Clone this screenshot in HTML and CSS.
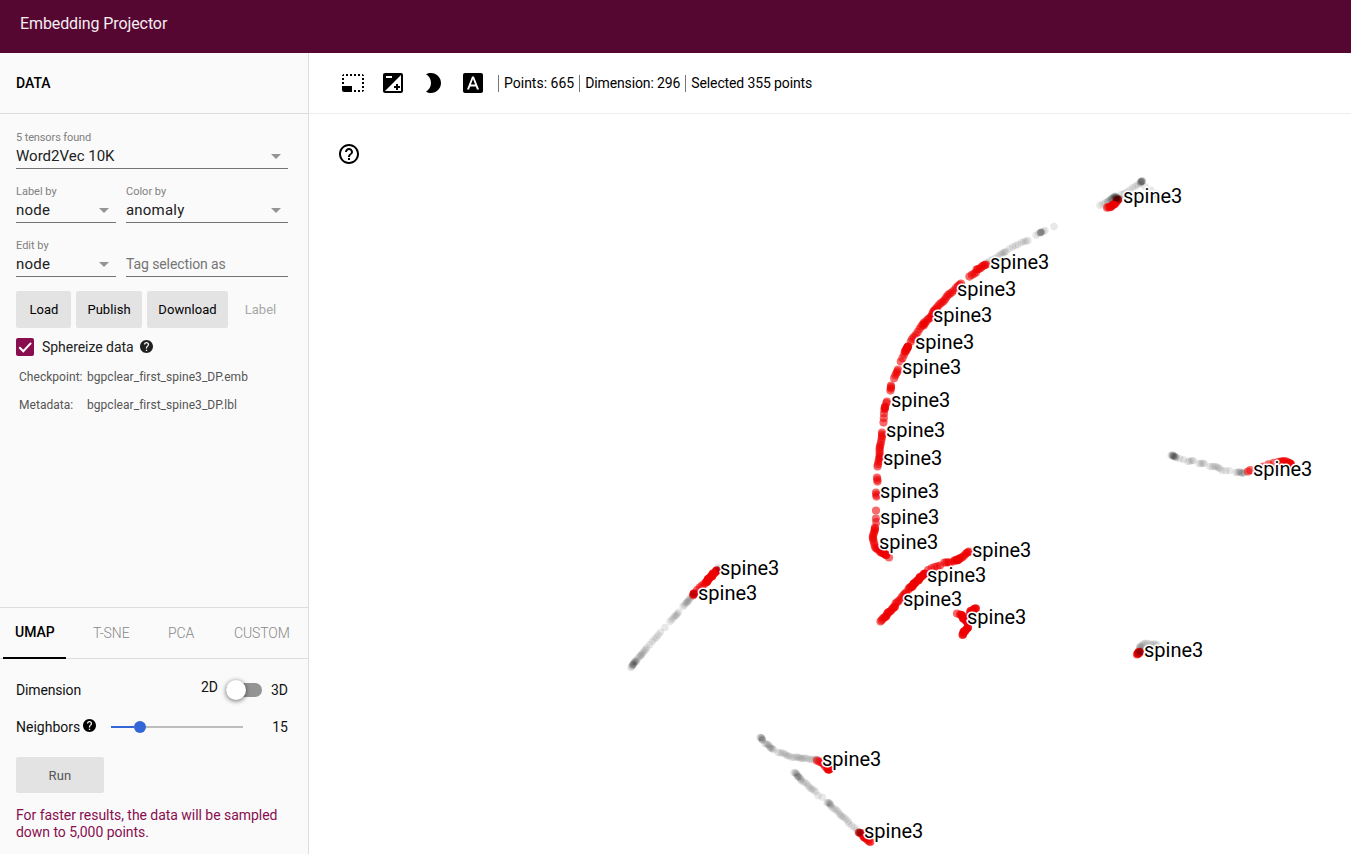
FILE: index.html
```html
<!DOCTYPE html>
<html lang="en">
<head>
<meta charset="utf-8">
<title>Embedding Projector</title>
<link rel="stylesheet" href="styles.css">
</head>
<body>
<svg class="defs" width="0" height="0">
  <symbol id="help" viewBox="2 2 20 20"><path d="M12 2C6.48 2 2 6.48 2 12s4.48 10 10 10 10-4.48 10-10S17.52 2 12 2zm1 17h-2v-2h2v2zm2.07-7.75l-.9.92C13.45 12.9 13 13.5 13 15h-2v-.5c0-1.1.45-2.1 1.17-2.83l1.24-1.26c.37-.36.59-.86.59-1.41 0-1.1-.9-2-2-2s-2 .9-2 2H8c0-2.21 1.79-4 4-4s4 1.79 4 4c0 .88-.36 1.68-.93 2.25z"/></symbol>
  <symbol id="caret" viewBox="0 0 10 5"><path d="M0 0h10L5 5z"/></symbol>
</svg>
<header class="appbar">Embedding Projector</header>
<div class="layout">
  <aside class="sidebar">
    <h2 class="panel-title">DATA</h2>
    <section class="data">
      <div class="row">
        <div class="field wide"><label class="tight">5 tensors found</label><div class="value dataset">Word2Vec 10K<svg class="caret"><use href="#caret"/></svg></div></div>
      </div>
      <div class="row">
        <div class="field narrow"><label>Label by</label><div class="value">node<svg class="caret"><use href="#caret"/></svg></div></div>
        <div class="field wide"><label>Color by</label><div class="value">anomaly<svg class="caret"><use href="#caret"/></svg></div></div>
      </div>
      <div class="row">
        <div class="field narrow"><label>Edit by</label><div class="value">node<svg class="caret"><use href="#caret"/></svg></div></div>
        <div class="field wide"><label></label><div class="value placeholder">Tag selection as</div></div>
      </div>
      <div class="buttons">
        <button class="btn load">Load</button><button class="btn publish">Publish</button><button class="btn download">Download</button><button class="btn flat">Label</button>
      </div>
      <div class="check-row">
        <span class="checkbox"><svg viewBox="0 0 18 18" width="18" height="18"><path d="M3.3 9.2l4 4 7.8-8.3" fill="none" stroke="#fff" stroke-width="2"/></svg></span>
        <span class="check-label">Sphereize data</span>
        <svg class="help dark"><use href="#help"/></svg>
      </div>
      <dl class="files">
        <dt>Checkpoint:</dt><dd>bgpclear_first_spine3_DP.emb</dd>
        <dt>Metadata:</dt><dd>bgpclear_first_spine3_DP.lbl</dd>
      </dl>
    </section>
    <section class="projection">
      <nav class="tabs">
        <span class="tab active">UMAP</span><span class="tab tsne">T-SNE</span><span class="tab pca">PCA</span><span class="tab custom">CUSTOM</span>
      </nav>
      <div class="controls">
        <div class="dimension">
          <span class="name">Dimension</span><span class="two">2D</span><span class="toggle"><span class="knob"></span></span><span>3D</span>
        </div>
        <div class="neighbors">
          <span>Neighbors</span><svg class="help"><use href="#help"/></svg>
          <span class="slider"><span class="filled"></span><span class="thumb"></span><span class="rest"></span></span>
          <span class="count">15</span>
        </div>
        <button class="btn run">Run</button>
        <p class="note">For faster results, the data will be sampled down to 5,000 points.</p>
      </div>
    </section>
  </aside>
  <main class="main">
    <div class="toolbar">
      <svg viewBox="0 0 24 24"><path d="M23 15h-2v2h2v-2zm0-4h-2v2h2v-2zm0 8h-2v2c1 0 2-1 2-2zM15 3h-2v2h2V3zm8 4h-2v2h2V7zm-2-4v2h2c0-1-1-2-2-2zM3 21h8v-6H1v4c0 1.1.9 2 2 2zM3 7H1v2h2V7zm12 12h-2v2h2v-2zm4-16h-2v2h2V3zm0 16h-2v2h2v-2zM3 3C2 3 1 4 1 5h2V3zm0 8H1v2h2v-2zm8-8H9v2h2V3zM7 3H5v2h2V3z"/></svg>
      <svg viewBox="0 0 24 24"><path d="M15 17v2h2v-2h2v-2h-2v-2h-2v2h-2v2h2zm5-15H4c-1.1 0-2 .9-2 2v16c0 1.1.9 2 2 2h16c1.1 0 2-.9 2-2V4c0-1.1-.9-2-2-2zM5 5h6v2H5V5zm15 15H4L20 4v16z"/></svg>
      <svg viewBox="0 0 24 24"><path d="M10 2c-1.82 0-3.53.5-5 1.35C7.99 5.08 10 8.3 10 12s-2.01 6.92-5 8.65C6.47 21.5 8.18 22 10 22c5.52 0 10-4.48 10-10S15.52 2 10 2z"/></svg>
      <svg viewBox="0 0 24 24"><path d="M9.93 13.5h4.14L12 7.98zM20 2H4c-1.1 0-2 .9-2 2v16c0 1.1.9 2 2 2h16c1.1 0 2-.9 2-2V4c0-1.1-.9-2-2-2zm-4.05 16.5l-1.14-3H9.17l-1.12 3H5.96l5.11-13h1.86l5.11 13h-2.09z"/></svg>
      <div class="stats"><span class="points">Points: 665</span><span>Dimension: 296</span><span>Selected 355 points</span></div>
    </div>
    <div class="scatter">
      <svg id="plot" width="1042" height="740" viewBox="309 114 1042 740"></svg>
      <svg class="tip" viewBox="0 0 24 24"><path d="M11 18h2v-2h-2v2zm1-16C6.48 2 2 6.48 2 12s4.48 10 10 10 10-4.48 10-10S17.52 2 12 2zm0 18c-4.41 0-8-3.59-8-8s3.59-8 8-8 8 3.59 8 8-3.59 8-8 8zm0-14c-2.21 0-4 1.79-4 4h2c0-1.1.9-2 2-2s2 .9 2 2c0 2-3 1.75-3 5h2c0-2.25 3-2.5 3-5 0-2.21-1.79-4-4-4z"/></svg>
    </div>
  </main>
</div>
<script src="plot.js"></script>
</body>
</html>
```

FILE: styles.css
```css
* { box-sizing: border-box; }
body { margin: 0; height: 854px; overflow: hidden; display: flex; flex-direction: column; background: #fff; color: #000; font: 14px/20px Roboto, sans-serif; }
.defs { position: absolute; }
.appbar { height: 53px; flex: none; padding: 14px 20px 0; background: #560731; font-size: 16px; letter-spacing: -.1px; color: #f5edf1; }
.layout { display: flex; flex: 1; min-height: 0; }
.sidebar { width: 309px; flex: none; display: flex; flex-direction: column; background: #fafafa; border-right: 1px solid #ddd; }
.panel-title { margin: 0; height: 61px; padding: 20px 16px; border-bottom: 1px solid #ddd; font-size: 14px; font-weight: 500; }
.data { padding: 15px 20px 0 16px; flex: 1; }
.row { display: flex; gap: 10px; margin-bottom: 14px; }
.field { border-bottom: 1px solid #737373; }
.field.wide { flex: 1; }
.field.narrow { width: 100px; }
.field label { display: block; height: 16px; font-size: 11px; line-height: 17px; letter-spacing: 0; color: #808080; }
.field label.tight { letter-spacing: -.12px; }
.value { height: 23px; padding-bottom: 2px; display: flex; align-items: center; justify-content: space-between; padding-right: 7px; font-size: 15px; letter-spacing: .2px; color: #212121; }
.value.dataset { letter-spacing: 0; }
.value.placeholder { color: #757575; font-size: 14px; letter-spacing: -.1px; }
.caret { width: 10px; height: 5px; margin-top: 2px; fill: #949494; }
.buttons { display: flex; gap: 5px; }
.btn { height: 37px; padding: 0; border: 0; border-radius: 2px; background: #e3e3e3; color: #000; font: 13px Roboto, sans-serif; letter-spacing: .05px; }
.load { width: 55px; padding-left: 1px; }
.publish { width: 66px; }
.download { width: 81px; }
.flat { width: 55px; background: none; color: #a8a8a8; }
.check-row { display: flex; align-items: center; height: 18px; margin-top: 10px; }
.checkbox { width: 18px; height: 18px; border-radius: 2px; background: #880e4f; }
.checkbox svg { display: block; }
.check-label { width: 98px; padding-left: 8px; white-space: nowrap; letter-spacing: -.04px; color: #212121; }
.help { width: 13px; height: 13px; }
.help.dark { margin: -2px 0 0 8px; fill: #212121; }
.files { display: grid; grid-template-columns: 68px 1fr; row-gap: 8px; margin: 11px 0 0 3px; font-size: 12px; letter-spacing: .04px; color: #555; white-space: nowrap; }
.files dd { margin: 0; }
.projection { height: 247px; border-top: 1px solid #ddd; }
.tabs { height: 51px; display: flex; border-bottom: 1px solid #ddd; line-height: 50px; font-weight: 300; letter-spacing: -.1px; color: #888; padding-left: 3px; }
.tab.active { width: 63px; height: 51px; border-bottom: 2px solid #000; padding-left: 12px; line-height: 48px; color: #000; font-weight: 500; letter-spacing: 0; }
.tsne { width: 75px; padding-left: 27px; }
.pca { width: 66px; padding-left: 27px; }
.custom { padding-left: 27px; }
.controls { padding: 21px 20px 0 16px; color: #111; }
.dimension { display: flex; height: 20px; }
.dimension .name { width: 185px; letter-spacing: -.15px; }
.two { width: 25px; margin-top: -3px; }
.toggle { width: 36px; height: 14px; margin: 3px 9px 0 0; border-radius: 7px; background: #949494; }
.knob { display: block; width: 20px; height: 20px; margin-top: -3px; border-radius: 50%; background: #fff; box-shadow: 0 1px 5px rgba(0,0,0,.6); }
.neighbors { display: flex; align-items: center; height: 20px; margin-top: 17px; }
.neighbors > span:first-child { width: 67px; }
.neighbors .help { margin-top: -3px; }
.slider { display: flex; align-items: center; width: 132px; margin-left: 15px; }
.filled { width: 23px; height: 2px; background: #3367d6; }
.thumb { width: 12px; height: 12px; border-radius: 50%; background: #3367d6; }
.rest { flex: 1; height: 2px; background: #bdbdbd; }
.count { margin-left: auto; }
.run { display: block; width: 88px; height: 36px; margin-top: 20px; color: #555; letter-spacing: .15px; }
.note { margin: 14px 0 0; line-height: 17px; letter-spacing: -.04px; color: #880e4f; }
.main { flex: 1; min-width: 0; }
.toolbar { height: 61px; display: flex; align-items: center; gap: 16px; padding-left: 32px; border-bottom: 1px solid #eee; }
.toolbar svg { width: 24px; height: 24px; }
.stats { display: flex; margin-left: -3px; line-height: 17px; letter-spacing: -.12px; }
.stats .points { letter-spacing: 0; }
.stats span { border-left: 1px solid #777; padding: 0 5px; white-space: nowrap; }
.scatter { position: relative; height: 740px; }
#plot { display: block; }
.tip { position: absolute; left: 28px; top: 28px; width: 24px; height: 24px; }
.label { font: 20px Roboto, sans-serif; fill: #000; stroke: #fff; stroke-width: 3px; stroke-linejoin: round; paint-order: stroke; }
.gray { fill: #000; fill-opacity: .09; }
.red { fill: #ee0000; fill-opacity: .58; }
```

FILE: plot.js
```js
// Each strand: class, number of points, then the vertices it runs through.
const strands = [
  ["gray", 1, 1054, 226],
  ["gray", 5, 1045, 230, 1036, 235],
  ["gray", 4, 1041, 232, 1040, 233],
  ["gray", 4, 1028, 240, 1021, 243],
  ["gray", 4, 1018, 244, 1009, 249],
  ["gray", 6, 1006, 251, 998, 256],
  ["gray", 4, 995, 258, 986, 263],
  ["gray", 8, 1142, 181, 1141, 182],
  ["gray", 8, 1140, 183, 1122, 195],
  ["gray", 3, 1145, 186, 1156, 194],
  ["gray", 2, 1157, 196, 1137, 198],
  ["gray", 4, 1100, 205, 1107, 202],
  ["gray", 10, 1108, 201, 1116, 196],
  ["gray", 10, 1171, 455, 1176, 457],
  ["gray", 3, 1176, 457, 1183, 460],
  ["gray", 4, 1188, 461, 1193, 461],
  ["gray", 4, 1199, 463, 1204, 464],
  ["gray", 6, 1210, 466, 1220, 468],
  ["gray", 3, 1222, 470, 1229, 471],
  ["gray", 8, 1236, 472, 1245, 473],
  ["gray", 11, 631, 667, 636, 661],
  ["gray", 9, 636, 660, 646, 650],
  ["gray", 7, 647, 647, 661, 632],
  ["gray", 1, 665, 627],
  ["gray", 7, 670, 621, 679, 612],
  ["gray", 9, 683, 606, 692, 597],
  ["gray", 7, 760, 737, 763, 740],
  ["gray", 9, 765, 743, 774, 750],
  ["gray", 7, 778, 752, 790, 756],
  ["gray", 15, 792, 757, 819, 760],
  ["gray", 10, 794, 772, 801, 779],
  ["gray", 9, 801, 780, 816, 792],
  ["gray", 2, 818, 795, 822, 797],
  ["gray", 6, 827, 802, 831, 805],
  ["gray", 10, 832, 807, 848, 821],
  ["gray", 5, 849, 823, 859, 833],
  ["gray", 14, 1138, 652, 1140, 646, 1147, 643, 1157, 645],
  ["gray", 2, 1166, 648, 1176, 652],
  ["red", 8, 986, 264, 977, 270],
  ["red", 4, 976, 272, 969, 277],
  ["red", 26, 961, 283, 939, 305, 924, 325],
  ["red", 9, 924, 322, 911, 342],
  ["red", 6, 908, 346, 905, 351],
  ["red", 6, 908, 346, 901, 361],
  ["red", 5, 898, 369, 894, 378],
  ["red", 4, 891, 385, 890, 391],
  ["red", 2, 887, 401, 886, 403],
  ["red", 4, 885, 406, 884, 410],
  ["red", 3, 884, 413, 883, 423],
  ["red", 16, 882, 432, 880, 450, 878, 466],
  ["red", 3, 877, 477, 877, 482],
  ["red", 3, 876, 492, 876, 497],
  ["red", 1, 876, 510],
  ["red", 2, 876, 518, 876, 522],
  ["red", 22, 875, 527, 873, 536, 875, 548, 883, 553, 886, 555],
  ["red", 1, 889, 557],
  ["red", 15, 969, 551, 960, 559, 954, 561],
  ["red", 4, 950, 562, 944, 563],
  ["red", 5, 940, 565, 928, 570],
  ["red", 25, 925, 573, 909, 589],
  ["red", 8, 906, 592, 896, 604],
  ["red", 16, 895, 606, 881, 621],
  ["red", 1, 957, 613],
  ["red", 12, 960, 614, 967, 622],
  ["red", 14, 976, 608, 971, 611, 968, 622],
  ["red", 12, 968, 627, 962, 635],
  ["red", 22, 717, 570, 706, 582],
  ["red", 5, 706, 582, 697, 590],
  ["red", 5, 694, 593, 693, 595],
  ["gray", 2, 718, 567, 719, 569],
  ["gray", 2, 693, 594, 694, 594],
  ["red", 7, 817, 760, 829, 769],
  ["red", 4, 828, 769, 829, 770],
  ["red", 12, 859, 832, 870, 842],
  ["gray", 4, 858, 832, 860, 833],
  ["red", 2, 1248, 471, 1250, 470],
  ["red", 14, 1258, 468, 1280, 461, 1288, 462, 1291, 465],
  ["red", 10, 1137, 654, 1140, 652],
  ["gray", 5, 1138, 653, 1141, 651],
  ["red", 14, 1118, 199, 1114, 205, 1107, 208],
  ["gray", 12, 1114, 197, 1120, 199]
];
const labels = [
  [1123, 203], [990, 269], [957, 296], [933, 322], [915, 349], [902, 374],
  [891, 407], [886, 437], [883, 465], [880, 498], [880, 524], [879, 549],
  [972, 557], [927, 582], [903, 606], [967, 624], [720, 575], [698, 600],
  [1253, 476], [1144, 657], [822, 766], [864, 838]
];
const plot = document.getElementById("plot");
function add(tag, attrs, text) {
  const el = document.createElementNS("http://www.w3.org/2000/svg", tag);
  for (const k in attrs) el.setAttribute(k, attrs[k]);
  if (text) el.textContent = text;
  plot.appendChild(el);
}
for (const [cls, n, ...v] of strands) {
  const segments = v.length / 2 - 1;
  for (let i = 0; i < n; i++) {
    const t = n > 1 ? i / (n - 1) * segments : 0;
    const s = Math.max(0, Math.min(Math.floor(t), segments - 1));
    const f = t - s;
    const x = segments ? v[2 * s] + (v[2 * s + 2] - v[2 * s]) * f : v[0];
    const y = segments ? v[2 * s + 1] + (v[2 * s + 3] - v[2 * s + 1]) * f : v[1];
    add("circle", { class: cls, cx: x + Math.sin(i * 7) * 0.5, cy: y + Math.cos(i * 5) * 0.5, r: cls === "red" ? 4.1 : 3.7 });
  }
}
for (const [x, y] of labels) add("text", { class: "label", x, y }, "spine3");
```
